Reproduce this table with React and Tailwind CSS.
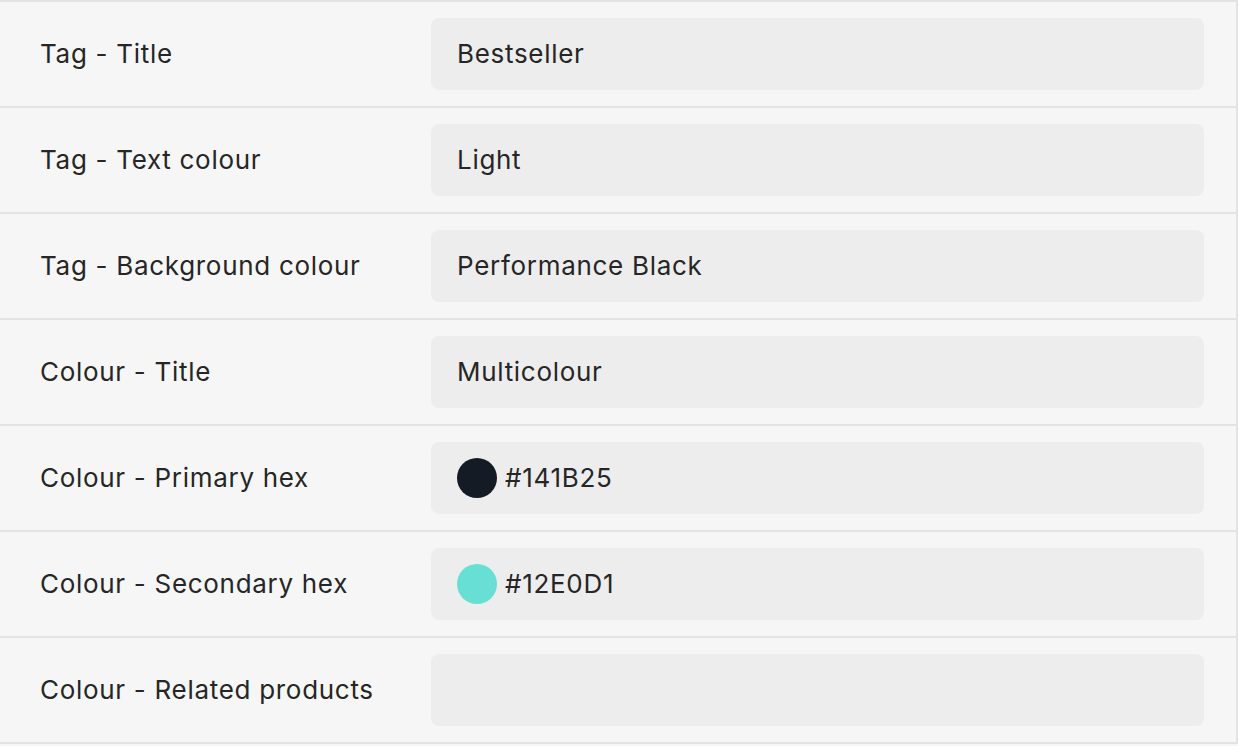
import React from "react";

const rows = [
  { label: "Tag - Title", value: "Bestseller" },
  { label: "Tag - Text colour", value: "Light" },
  { label: "Tag - Background colour", value: "Performance Black" },
  { label: "Colour - Title", value: "Multicolour" },
  { label: "Colour - Primary hex", value: "#141B25", swatch: "bg-[#141b25]" },
  { label: "Colour - Secondary hex", value: "#12E0D1", swatch: "bg-[#68dfd4]" },
  { label: "Colour - Related products", value: "" },
];

const FieldRow = ({ label, value, swatch }) => (
  <div className="grid grid-cols-[431px_1fr] items-center border-b-2 border-[#e3e3e3] py-4 pr-8">
    <div className="pl-10 text-[26px] leading-8 tracking-[0.7px] text-[#262626]">{label}</div>
    <div className="flex h-[72px] items-center gap-2 rounded-lg bg-[#ededee] px-[26px] text-[26px] leading-8 tracking-[0.7px] text-[#262626]">
      {swatch && <span className={`h-10 w-10 shrink-0 rounded-full ${swatch}`} />}
      <span>{value}</span>
    </div>
  </div>
);

export default function App() {
  return (
    <div
      className="min-h-[746px] w-[1238px] bg-[#f6f6f6]"
      style={{ fontFamily: "Inter, 'Noto Sans', sans-serif" }}
    >
      <div className="border-r-2 border-t-2 border-[#e3e3e3]">
        {rows.map((row) => (
          <FieldRow key={row.label} {...row} />
        ))}
      </div>
    </div>
  );
}
